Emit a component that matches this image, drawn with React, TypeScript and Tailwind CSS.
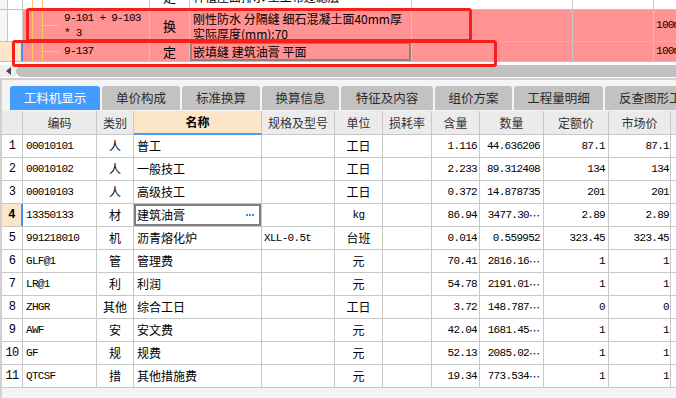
import React from 'react'

const mono = "font-['Liberation_Mono',monospace] text-[11px] tracking-[-0.7px]"
const cjk = "font-['Noto_Sans_CJK_SC','Noto_Sans',sans-serif]"

type Row = {
  n: string
  code: string
  kind: string
  name: string
  spec?: string
  unit: string
  qty: string
  amt: string
  more?: boolean
  quota: string
  market: string
}

const rows: Row[] = [
  { n: '1', code: '00010101', kind: '人', name: '普工', unit: '工日', qty: '1.116', amt: '44.636206', quota: '87.1', market: '87.1' },
  { n: '2', code: '00010102', kind: '人', name: '一般技工', unit: '工日', qty: '2.233', amt: '89.312408', quota: '134', market: '134' },
  { n: '3', code: '00010103', kind: '人', name: '高级技工', unit: '工日', qty: '0.372', amt: '14.878735', quota: '201', market: '201' },
  { n: '4', code: '13350133', kind: '材', name: '建筑油膏', unit: 'kg', qty: '86.94', amt: '3477.30', more: true, quota: '2.89', market: '2.89' },
  { n: '5', code: '991218010', kind: '机', name: '沥青熔化炉', spec: 'XLL-0.5t', unit: '台班', qty: '0.014', amt: '0.559952', quota: '323.45', market: '323.45' },
  { n: '6', code: 'GLF@1', kind: '管', name: '管理费', unit: '元', qty: '70.41', amt: '2816.16', more: true, quota: '1', market: '1' },
  { n: '7', code: 'LR@1', kind: '利', name: '利润', unit: '元', qty: '54.78', amt: '2191.01', more: true, quota: '1', market: '1' },
  { n: '8', code: 'ZHGR', kind: '其他', name: '综合工日', unit: '工日', qty: '3.72', amt: '148.787', more: true, quota: '0', market: '0' },
  { n: '9', code: 'AWF', kind: '安', name: '安文费', unit: '元', qty: '42.04', amt: '1681.45', more: true, quota: '1', market: '1' },
  { n: '10', code: 'GF', kind: '规', name: '规费', unit: '元', qty: '52.13', amt: '2085.02', more: true, quota: '1', market: '1' },
  { n: '11', code: 'QTCSF', kind: '措', name: '其他措施费', unit: '元', qty: '19.34', amt: '773.534', more: true, quota: '1', market: '1' },
]

const tabs = [
  { label: '工料机显示', w: 'w-[90px] justify-center' },
  { label: '单价构成', w: 'w-[78px] justify-center' },
  { label: '标准换算', w: 'w-[78px] justify-center' },
  { label: '换算信息', w: 'w-[77px] justify-center' },
  { label: '特征及内容', w: 'w-[92px] justify-center' },
  { label: '组价方案', w: 'w-[77px] justify-center' },
  { label: '工程量明细', w: 'w-[89px] justify-center' },
  { label: '反查图形工程量', w: 'w-[100px] justify-start pl-[14px]' },
]

const line = 'border-r border-[#c8c8c8] shrink-0'

// tree row in the upper grid (the quota list)
const TopRow = ({
  h,
  bg,
  left,
  code,
  kind,
  name,
  selected,
}: {
  h: string
  bg: string
  left: React.ReactNode
  code: React.ReactNode
  kind: string
  name: React.ReactNode
  selected?: boolean
}) => (
  <div className={`flex ${h} border-b border-[#c0c0c0]`}>
    {left}
    <div className={`w-[127px] ${bg} ${line} flex items-center self-stretch`}>
      <div className="ml-[9px] w-px self-stretch bg-[#ffc75e]" />
      <div className="ml-[9px] w-px self-stretch bg-[#ffc75e]" />
      <div className="w-[16px] h-px bg-[#ffc75e]" />
      <div className={`ml-[5px] ${mono} text-[11.5px] leading-[15px] text-black whitespace-nowrap`}>{code}</div>
    </div>
    <div className={`w-[40px] ${bg} ${line} flex items-center justify-center ${cjk} text-[13px] text-black`}>{kind}</div>
    <div
      className={`w-[222px] ${bg} ${line} flex items-center pl-[3px] ${cjk} text-[12px] leading-[15px] text-black whitespace-nowrap overflow-hidden ${
        selected ? 'shadow-[inset_0_0_0_2px_#858585]' : ''
      }`}
    >
      {name}
    </div>
    <div className={`w-[161px] ${bg} ${line}`} />
    <div className={`w-[81px] ${bg} ${line}`} />
    <div className={`flex-1 ${bg} flex items-center pl-[2px] ${mono} text-[11.5px] text-black whitespace-nowrap overflow-hidden`}>
      100m2
    </div>
  </div>
)

const Dots = () => <span className={`${cjk} text-[11px] tracking-normal`}>⋯</span>

export default function App() {
  return (
    <div className="relative w-[676px] h-[398px] overflow-hidden bg-white flex flex-col">
      {/* upper grid */}
      <div className="h-[62px] overflow-hidden shrink-0">
        <div className="-mt-[16px]">
          <TopRow
            h="h-[26px]"
            bg="bg-white"
            left={
              <>
                <div className={`w-[8px] bg-[#f6f6f6] ${line}`} />
                <div className={`w-[15px] bg-white ${line}`} />
              </>
            }
            code="9-100"
            kind="定"
            name="种植屋面排水 土工布过滤层"
          />
          <TopRow
            h="h-[32px]"
            bg="bg-[#ff9292]"
            left={
              <>
                <div className={`w-[8px] bg-[#f6f6f6] ${line}`} />
                <div className={`w-[15px] bg-white ${line}`} />
              </>
            }
            code={
              <>
                9-101 + 9-103
                <br />* 3
              </>
            }
            kind="换"
            name={
              <span>
                刚性防水 分隔缝 细石混凝土面40mm厚
                <br />
                实际厚度(mm):70
              </span>
            }
          />
          <TopRow
            h="h-[20px]"
            bg="bg-[#ff9292]"
            left={<div className="w-[23px] shrink-0 bg-[#fde6c8] border-r-2 border-[#3f8ff5]" />}
            code="9-137"
            kind="定"
            name="嵌填缝 建筑油膏 平面"
            selected
          />
        </div>
      </div>

      {/* horizontal scrollbar */}
      <div className="h-[18px] shrink-0 bg-white pt-[3px]">
        <div className="flex h-[12px]">
          <div className="w-[16px] bg-[#efefef] flex items-center justify-center">
            <svg width="5" height="8" viewBox="0 0 5 8">
              <polygon points="5,0 5,8 0,4" fill="#4a4a4a" />
            </svg>
          </div>
          <div className="flex-1 bg-[#c1c1c1] rounded-l-[6px]" />
        </div>
        <div className="mt-[1px] h-[2px] bg-[#cfcfcf]" />
      </div>

      {/* lower panel */}
      <div className="flex-1 bg-[#f4f4f4] border-l-2 border-[#d0d0d0] flex flex-col">
        <div className="flex gap-[2px] pl-[8px] pt-[6px] h-[31px] shrink-0 overflow-hidden">
          {tabs.map((t, i) => (
            <div
              key={t.label}
              className={`${t.w} h-[24px] shrink-0 rounded-t-[3px] flex items-center whitespace-nowrap overflow-hidden ${cjk} text-[12.5px] ${
                i === 0 ? 'bg-[#459cff] text-white' : 'bg-[#c2c2c2] text-[#2c2c2c]'
              }`}
            >
              {t.label}
            </div>
          ))}
        </div>

        <div className={`${cjk} text-[12px] text-black`}>
          {/* header */}
          <div className="flex h-[24px] bg-[#ebebeb] text-[#333]">
            <div className={`w-[21px] ${line} border-b`} />
            <div className={`w-[74px] ${line} border-b flex items-center justify-center`}>编码</div>
            <div className={`w-[37px] ${line} border-b flex items-center justify-center`}>类别</div>
            <div className="w-[128px] shrink-0 border-r border-[#c8c8c8] border-b-2 border-b-[#459cff] bg-[#fde6c8] flex items-center justify-center font-bold text-black">
              名称
            </div>
            <div className={`w-[73px] ${line} border-b flex items-center justify-center`}>规格及型号</div>
            <div className={`w-[48px] ${line} border-b flex items-center justify-center`}>单位</div>
            <div className={`w-[49px] ${line} border-b flex items-center justify-center`}>损耗率</div>
            <div className={`w-[48px] ${line} border-b flex items-center justify-center`}>含量</div>
            <div className={`w-[64px] ${line} border-b flex items-center justify-center`}>数量</div>
            <div className={`w-[65px] ${line} border-b flex items-center justify-center`}>定额价</div>
            <div className={`w-[62px] ${line} border-b flex items-center justify-center`}>市场价</div>
            <div className="flex-1 border-b border-[#c8c8c8]" />
          </div>

          {rows.map((r) => {
            const sel = r.n === '4'
            return (
              <div key={r.n} className="flex h-[23px] bg-white border-b border-[#c8c8c8]">
                <div
                  className={`w-[21px] shrink-0 flex items-center justify-center ${mono} text-[12px] tracking-[-0.5px] ${
                    sel ? 'bg-[#fde6c8] border-r-2 border-[#3f8ff5] font-bold' : 'border-r border-[#c8c8c8]'
                  }`}
                >
                  {r.n}
                </div>
                <div className={`w-[74px] ${line} flex items-center pl-[3px] ${mono}`}>{r.code}</div>
                <div className={`w-[37px] ${line} flex items-center justify-center`}>{r.kind}</div>
                <div
                  className={`w-[128px] ${line} flex items-center pl-[3px] ${
                    sel ? 'shadow-[inset_0_0_0_2px_#7d7d7d]' : ''
                  }`}
                >
                  <span className="flex-1">{r.name}</span>
                  {sel && (
                    <span className="mr-[7px] flex gap-[1px]">
                      <span className="w-[2px] h-[2px] bg-[#3d8fe0]" />
                      <span className="w-[2px] h-[2px] bg-[#3d8fe0]" />
                      <span className="w-[2px] h-[2px] bg-[#3d8fe0]" />
                    </span>
                  )}
                </div>
                <div className={`w-[73px] ${line} flex items-center pl-[2px] ${mono}`}>{r.spec}</div>
                <div className={`w-[48px] ${line} flex items-center justify-center ${r.unit === 'kg' ? mono : ''}`}>{r.unit}</div>
                <div className={`w-[49px] ${line}`} />
                <div className={`w-[48px] ${line} flex items-center justify-end pr-[2px] ${mono}`}>{r.qty}</div>
                <div className={`w-[64px] ${line} flex items-center justify-end pr-[3px] ${mono}`}>
                  {r.amt}
                  {r.more && <Dots />}
                </div>
                <div className={`w-[65px] ${line} flex items-center justify-end pr-[3px] ${mono}`}>{r.quota}</div>
                <div className={`w-[62px] ${line} flex items-center justify-end pr-[1px] ${mono}`}>{r.market}</div>
                <div className="flex-1" />
              </div>
            )
          })}
        </div>
      </div>

      {/* red annotation boxes */}
      <div className="absolute left-[26px] top-[8px] w-[446px] h-[34px] border-[3px] border-[#f5201a] rounded-[3px]" />
      <div className="absolute left-[12px] top-[40px] w-[485px] h-[27px] border-[3px] border-[#f5201a] rounded-[3px]" />
    </div>
  )
}
